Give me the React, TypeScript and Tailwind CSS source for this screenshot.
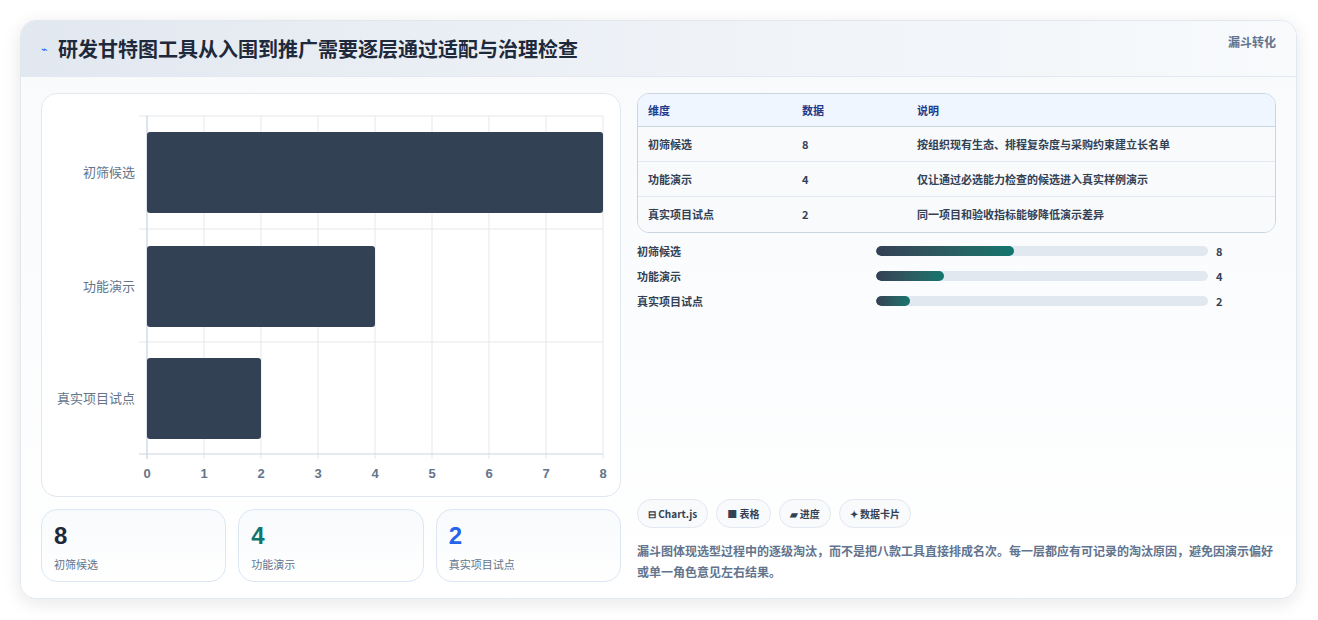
const font = { fontFamily: '"Noto Sans CJK SC", "Noto Sans", sans-serif' };

const rows = [
  { label: '初筛候选', value: 8, desc: '按组织现有生态、排程复杂度与采购约束建立长名单', pct: 41.6 },
  { label: '功能演示', value: 4, desc: '仅让通过必选能力检查的候选进入真实样例演示', pct: 20.5 },
  { label: '真实项目试点', value: 2, desc: '同一项目和验收指标能够降低演示差异', pct: 10.2 },
];

function Chart() {
  const x0 = 105, x1 = 561, unit = (x1 - x0) / 8;
  const bars = [
    { y: 38, label: '初筛候选', v: 8 },
    { y: 152, label: '功能演示', v: 4 },
    { y: 264, label: '真实项目试点', v: 2 },
  ];
  return (
    <svg width="578" height="401" className="block">
      {Array.from({ length: 9 }).map((_, i) => (
        <line key={i} x1={x0 + i * unit} x2={x0 + i * unit} y1={22} y2={365} stroke="#e5e7eb" />
      ))}
      {[22, 135, 248].map((y) => (
        <line key={y} x1={97} x2={x1} y1={y} y2={y} stroke="#e5e7eb" />
      ))}
      <line x1={97} x2={x1} y1={360} y2={360} stroke="#cbd5e1" />
      <line x1={x0} x2={x0} y1={22} y2={365} stroke="#cbd5e1" />
      {bars.map((b) => (
        <g key={b.label}>
          <rect x={x0} y={b.y} width={b.v * unit} height={81} rx={3} fill="#334155" />
          <text x={93} y={b.y + 45} textAnchor="end" fontSize="13" fill="#64748b" style={font}>{b.label}</text>
        </g>
      ))}
      {Array.from({ length: 9 }).map((_, i) => (
        <text key={i} x={x0 + i * unit} y={384} textAnchor="middle" fontSize="13" fontWeight="600" fill="#64748b" style={{ fontFamily: '"Liberation Sans", sans-serif' }}>{i}</text>
      ))}
    </svg>
  );
}

export default function App() {
  return (
    <div className="w-[1318px] h-[620px] bg-white pt-5 pl-5" style={font}>
      <div className="w-[1277px] h-[579px] rounded-2xl border border-slate-200 bg-white shadow-[0_4px_18px_rgba(15,23,42,0.10)] overflow-hidden flex flex-col">
        <div className="h-[56px] shrink-0 flex items-center justify-between px-5 bg-gradient-to-r from-[#e2e8f0] via-[#eef2f7] to-[#f8fafc] border-b border-slate-200">
          <div className="flex items-center gap-2.5">
            <span className="text-[11px] text-blue-600">⌁</span>
            <span className="text-[20px] font-bold text-[#1e293b]">研发甘特图工具从入围到推广需要逐层通过适配与治理检查</span>
          </div>
          <span className="self-start mt-3 text-[12px] font-bold text-slate-500">漏斗转化</span>
        </div>
        <div className="flex-1 flex gap-4 px-5 pt-4 pb-4 bg-gradient-to-b from-[#f8fafc] to-white">
          <div className="w-[580px] flex flex-col gap-3">
            <div className="h-[404px] rounded-2xl border border-slate-200 bg-white">
              <Chart />
            </div>
            <div className="grid grid-cols-3 gap-3">
              {[
                { v: 8, l: '初筛候选', c: 'text-[#1e293b]' },
                { v: 4, l: '功能演示', c: 'text-[#0f766e]' },
                { v: 2, l: '真实项目试点', c: 'text-[#2563eb]' },
              ].map((s) => (
                <div key={s.l} className="h-[73px] rounded-2xl border border-[#dbe7f5] bg-gradient-to-b from-[#f8fafc] to-white px-3 pt-3">
                  <div className={`text-[24px] leading-7 font-extrabold ${s.c}`} style={{ fontFamily: '"Liberation Sans", sans-serif' }}>{s.v}</div>
                  <div className="mt-1.5 text-[11px] text-slate-500">{s.l}</div>
                </div>
              ))}
            </div>
          </div>
          <div className="flex-1 flex flex-col">
            <div className="rounded-xl border border-slate-300 overflow-hidden text-[11px]">
              <div className="grid grid-cols-[154px_115px_1fr] h-[33px] items-center px-2.5 bg-[#eff6ff] border-b border-slate-300 font-bold text-[#1e3a8a]">
                <span>维度</span><span>数据</span><span>说明</span>
              </div>
              {rows.map((r, i) => (
                <div key={r.label} className={`grid grid-cols-[154px_115px_1fr] h-[35px] items-center px-2.5 font-semibold text-[#334155] bg-[#f8fafc] ${i < 2 ? 'border-b border-slate-200' : ''}`}>
                  <span>{r.label}</span><span>{r.value}</span><span>{r.desc}</span>
                </div>
              ))}
            </div>
            <div className="mt-2.5 flex flex-col gap-[9px]">
              {rows.map((r) => (
                <div key={r.label} className="flex items-center h-[16px] text-[11px] font-semibold text-[#334155]">
                  <span className="w-[239px]">{r.label}</span>
                  <div className="w-[332px] h-[10px] rounded-full bg-[#e2e8f0] overflow-hidden">
                    <div className="h-full rounded-full bg-gradient-to-r from-[#334155] to-[#0f766e]" style={{ width: `${r.pct}%` }} />
                  </div>
                  <span className="ml-2 font-bold">{r.value}</span>
                </div>
              ))}
            </div>
            <div className="mt-auto flex gap-2">
              {['⊟ Chart.js', '■ 表格', '▰ 进度', '✦ 数据卡片'].map((c) => (
                <span key={c} className="h-[29px] px-2.5 flex items-center rounded-full border border-slate-200 bg-[#f8fafc] text-[10px] font-bold text-[#334155]">{c}</span>
              ))}
            </div>
            <p className="mt-3 text-[12px] leading-[21px] font-semibold text-slate-500">漏斗图体现选型过程中的逐级淘汰，而不是把八款工具直接排成名次。每一层都应有可记录的淘汰原因，避免因演示偏好或单一角色意见左右结果。</p>
          </div>
        </div>
      </div>
    </div>
  );
}
